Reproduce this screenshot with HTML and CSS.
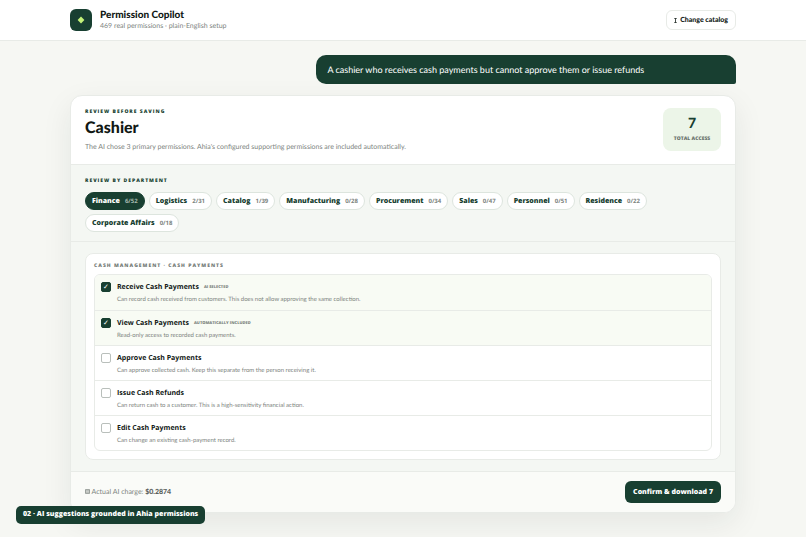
FILE: index.html
```
<!DOCTYPE html>
<html lang="en">
<head>
  <meta charset="UTF-8">
  <meta name="viewport" content="width=device-width, initial-scale=1.0">
  <title>Permission Copilot</title>
  <link rel="stylesheet" href="styles.css">
</head>
<body>
  <header class="topbar">
    <div class="logo">
      <svg width="8" height="8" viewBox="0 0 8 8" aria-hidden="true"><path d="M4 .6 7.4 4 4 7.4.6 4Z" fill="#c4f27a"/></svg>
    </div>
    <div class="brand">
      <h1>Permission Copilot</h1>
      <p>469 real permissions · plain-English setup</p>
    </div>
    <button class="change" type="button">
      <svg width="3" height="5" viewBox="0 0 3 5" aria-hidden="true"><path d="M.3 .5h2.4M.3 4.5h2.4M1.5 .5v4" stroke="#15201b" stroke-width=".8" fill="none"/></svg>
      Change catalog
    </button>
  </header>

  <main>
    <p class="bubble">A cashier who receives cash payments but cannot approve them or issue refunds</p>

    <section class="card">
      <div class="card-head">
        <div>
          <p class="eyebrow">Review before saving</p>
          <h2>Cashier</h2>
          <p class="summary">The AI chose 3 primary permissions. Ahia's configured supporting permissions are included automatically.</p>
        </div>
        <div class="total"><strong>7</strong><span>Total access</span></div>
      </div>

      <div class="departments">
        <p class="eyebrow">Review by department</p>
        <div class="pills">
          <button class="pill active" type="button">Finance <small>6/52</small></button>
          <button class="pill" type="button">Logistics <small>2/31</small></button>
          <button class="pill" type="button">Catalog <small>1/39</small></button>
          <button class="pill" type="button">Manufacturing <small>0/28</small></button>
          <button class="pill" type="button">Procurement <small>0/34</small></button>
          <button class="pill" type="button">Sales <small>0/47</small></button>
          <button class="pill" type="button">Personnel <small>0/51</small></button>
          <button class="pill" type="button">Residence <small>0/22</small></button>
          <button class="pill" type="button">Corporate Affairs <small>0/18</small></button>
        </div>
      </div>

      <div class="permissions">
        <div class="group">
          <h3>Cash Management · Cash Payments</h3>
          <div class="list">
            <label class="row selected">
              <input type="checkbox" checked>
              <span class="text">
                <span class="name">Receive Cash Payments <em>AI selected</em></span>
                <span class="desc">Can record cash received from customers. This does not allow approving the same collection.</span>
              </span>
            </label>
            <label class="row selected">
              <input type="checkbox" checked>
              <span class="text">
                <span class="name">View Cash Payments <em>Automatically included</em></span>
                <span class="desc">Read-only access to recorded cash payments.</span>
              </span>
            </label>
            <label class="row">
              <input type="checkbox">
              <span class="text">
                <span class="name">Approve Cash Payments</span>
                <span class="desc">Can approve collected cash. Keep this separate from the person receiving it.</span>
              </span>
            </label>
            <label class="row">
              <input type="checkbox">
              <span class="text">
                <span class="name">Issue Cash Refunds</span>
                <span class="desc">Can return cash to a customer. This is a high-sensitivity financial action.</span>
              </span>
            </label>
            <label class="row">
              <input type="checkbox">
              <span class="text">
                <span class="name">Edit Cash Payments</span>
                <span class="desc">Can change an existing cash-payment record.</span>
              </span>
            </label>
          </div>
        </div>
      </div>

      <footer class="card-foot">
        <p>
          <svg width="5" height="5" viewBox="0 0 5 5" aria-hidden="true"><path d="M.5 .5h4v4h-4zM.5 1.8h4M.5 3.2h4" fill="none" stroke="#7d8480" stroke-width=".7"/></svg>
          Actual AI charge: <b>$0.2874</b>
        </p>
        <button class="confirm" type="button">Confirm &amp; download 7</button>
      </footer>
    </section>
  </main>

  <div class="caption">02 · AI suggestions grounded in Ahia permissions</div>
</body>
</html>
```
FILE: styles.css
```
:root { --green:#183f31; --ink:#111814; --muted:#7d8480; --line:#e8ebe7; --bg:#f6f7f3; --soft:#f4f7f3; --heavy:"Open Sans",Lato,sans-serif; }
*{box-sizing:border-box;margin:0;font-family:Lato,"Open Sans",sans-serif;}
body{background:var(--bg);color:var(--ink);font-size:7px;line-height:10px;text-rendering:geometricPrecision;}
button{cursor:pointer;text-rendering:inherit;}

.topbar{display:flex;align-items:center;gap:8px;height:41px;padding:0 70px;background:#fff;border-bottom:1px solid var(--line);}
.logo{display:grid;place-items:center;width:22px;height:22px;border-radius:6px;background:var(--green);}
.brand{flex:1;}
.brand h1{font-size:10px;line-height:12px;font-weight:900;}
.brand p{color:var(--muted);}
.change{display:flex;align-items:center;gap:3px;height:20px;padding:0 7px;border:1px solid var(--line);border-radius:6px;background:#fff;color:var(--ink);font-size:7px;font-weight:900;}

main{display:flex;flex-direction:column;gap:11px;padding:14px 70px 24px;}
.bubble{align-self:flex-end;width:63%;padding:8px 11px;border-radius:10px 10px 2px 10px;background:var(--green);color:#fff;font-size:9px;line-height:13px;}

.card{overflow:hidden;border:1px solid var(--line);border-radius:12px;background:#fff;box-shadow:0 10px 30px rgba(24,40,32,.08);}
.eyebrow{color:var(--green);font-family:var(--heavy);font-size:5px;line-height:8px;font-weight:800;letter-spacing:1px;text-transform:uppercase;}
.card-head{display:flex;justify-content:space-between;align-items:flex-start;padding:12px 14px;border-bottom:1px solid var(--line);}
.card-head h2{margin:2px 0 4px;font-size:16px;line-height:20px;font-weight:900;}
.summary{color:var(--muted);font-size:7px;line-height:10px;}
.total{display:flex;flex-direction:column;align-items:center;gap:4px;width:58px;height:43px;padding-top:7px;border-radius:8px;background:#ecf5e8;}
.total strong{color:var(--green);font-size:14px;line-height:16px;font-weight:900;}
.total span{color:#68716b;font-family:var(--heavy);font-size:5px;line-height:8px;font-weight:800;text-transform:uppercase;}

.departments{padding:12px 14px 9px;border-bottom:1px solid var(--line);background:var(--soft);}
.pills{display:flex;flex-wrap:wrap;gap:4px;margin-top:7px;}
.pill{display:flex;align-items:center;gap:5px;height:18px;padding:0 6px;border:1px solid #dde5de;border-radius:9px;background:#fff;color:var(--green);font-family:var(--heavy);font-size:7px;font-weight:800;}
.pill small{color:var(--muted);font-family:var(--heavy);font-size:6px;font-weight:700;}
.pill.active{border-color:var(--green);background:var(--green);color:#fff;}
.pill.active small{color:#a6b8ae;}

.permissions{padding:11px 14px;background:var(--soft);}
.group{padding:8px;border:1px solid var(--line);border-radius:8px;background:#fff;}
.group h3{margin-bottom:4px;color:#737a76;font-family:var(--heavy);font-size:5px;line-height:8px;font-weight:800;letter-spacing:1px;text-transform:uppercase;}
.list{overflow:hidden;border:1px solid var(--line);border-radius:6px;}
.row{display:flex;gap:6px;height:35px;padding:7px 6px;cursor:pointer;}
.row + .row{border-top:1px solid var(--line);}
.row.selected{background:#f8fbf4;}
.row input{appearance:none;width:10px;height:10px;border:1px solid #b9bfbb;border-radius:2px;background:#fff;}
.row input:checked{border-color:var(--green);background:var(--green);}
.row input:checked::before{content:"✓";display:block;color:#fff;font:bold 7px/8px "DejaVu Sans",sans-serif;text-align:center;}
.text{display:flex;flex-direction:column;gap:2px;padding-top:1px;}
.name{display:flex;align-items:center;gap:5px;font-family:var(--heavy);font-size:7px;line-height:10px;font-weight:700;}
.name em{color:var(--muted);font-family:var(--heavy);font-size:4px;font-style:normal;font-weight:800;text-transform:uppercase;}
.desc{color:var(--muted);font-size:6px;line-height:10px;}

.card-foot{display:flex;justify-content:space-between;align-items:center;padding:9px 14px;border-top:1px solid var(--line);background:#fafbf8;}
.card-foot p{color:var(--muted);}
.card-foot b{color:#59605c;font-weight:900;}
.confirm{height:22px;padding:0 8px;border:0;border-radius:6px;background:var(--green);color:#fff;font-family:var(--heavy);font-size:7px;font-weight:800;}

.caption{position:fixed;left:16px;bottom:13px;padding:4px 7px;border-radius:5px;background:var(--green);color:#fff;font-family:var(--heavy);font-size:7px;line-height:10px;font-weight:800;}
```
